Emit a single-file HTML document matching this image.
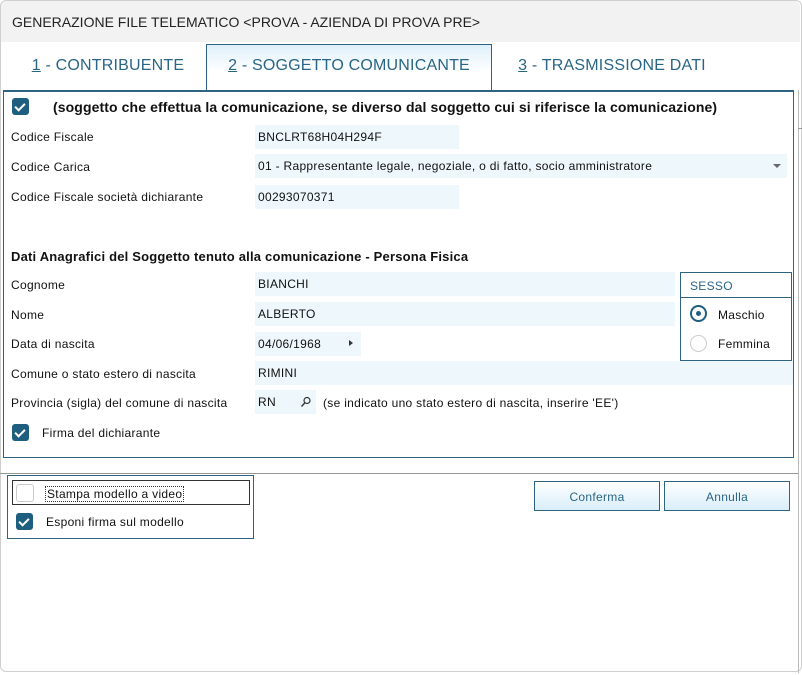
<!DOCTYPE html>
<html><head><meta charset="utf-8"><style>
*{box-sizing:border-box;margin:0;padding:0}
body{width:802px;height:675px;background:#fff;font-family:"Liberation Sans","DejaVu Sans",sans-serif;font-size:12px;letter-spacing:0.3px;color:#111;position:relative;overflow:hidden}
.a{position:absolute}
.win{left:0;top:0;width:802px;height:672px;border:1px solid #cfcfcf;border-radius:6px;background:#fff}
.title{left:1px;top:1px;width:799px;height:41px;background:#f2f2f2;border-radius:6px 6px 0 0;font-size:14px;letter-spacing:0;padding:13px 0 0 11px;color:#222}
.tab{top:44px;height:46px;font-size:16px;letter-spacing:0.2px;color:#2a6585;text-align:center;padding-top:13px}
.tab u{text-decoration:underline}
.act{border:1px solid #2e6382;border-bottom:none;background:linear-gradient(#dff0fa,#fff 60%)}
.panel{left:3px;top:90px;width:791px;height:368px;border:1px solid #2e6382;border-top-width:2px}
.fld{background:#eef7fc;height:24px;padding:5px 3px}
.lbl{left:11px}
.cb{width:17px;height:17px;border-radius:3px;background:#1e5f80}
.cb::after{content:"";position:absolute;left:5px;top:3px;width:4px;height:8px;border:solid #fff;border-width:0 2px 2px 0;transform:rotate(45deg)}
.btn{top:481px;height:30px;border:1px solid #2e6382;background:linear-gradient(#fff,#d9eef9);color:#2a6585;text-align:center;padding-top:8px}
</style></head><body>
<div class="a win"></div>
<div class="a title">GENERAZIONE FILE TELEMATICO &lt;PROVA - AZIENDA DI PROVA PRE&gt;</div>
<div class="a" style="left:0;top:473px;width:799px;border-top:1px solid #999"></div>
<div class="a" style="left:798px;top:90px;height:583px;border-left:1px solid #bbb"></div>
<div class="a" style="left:798px;top:128px;width:4px;border-top:1px solid #999"></div>
<div class="a tab" style="left:5px;width:206px"><u>1</u> - CONTRIBUENTE</div>
<div class="a tab act" style="left:206px;width:286px;padding-top:12px"><u>2</u> - SOGGETTO COMUNICANTE</div>
<div class="a tab" style="left:492px;width:240px"><u>3</u> - TRASMISSIONE DATI</div>
<div class="a panel"></div>
<div class="a cb" style="left:12px;top:98px"></div>
<div class="a" style="left:53px;top:99px;font-size:14px;font-weight:bold;letter-spacing:0.1px">(soggetto che effettua la comunicazione, se diverso dal soggetto cui si riferisce la comunicazione)</div>
<div class="a lbl" style="top:130px">Codice Fiscale</div>
<div class="a fld" style="left:255px;top:125px;width:204px">BNCLRT68H04H294F</div>
<div class="a lbl" style="top:160px">Codice Carica</div>
<div class="a fld" style="left:255px;top:154px;width:532px">01 - Rappresentante legale, negoziale, o di fatto, socio amministratore<span class="a" style="right:6px;top:10px;border:4px solid transparent;border-top:4px solid #666;border-bottom:none"></span></div>
<div class="a lbl" style="top:190px">Codice Fiscale società dichiarante</div>
<div class="a fld" style="left:255px;top:185px;width:204px">00293070371</div>
<div class="a" style="left:11px;top:249px;font-size:13px;font-weight:bold;letter-spacing:0.2px">Dati Anagrafici del Soggetto tenuto alla comunicazione - Persona Fisica</div>
<div class="a lbl" style="top:278px">Cognome</div>
<div class="a fld" style="left:255px;top:272px;width:420px">BIANCHI</div>
<div class="a lbl" style="top:308px">Nome</div>
<div class="a fld" style="left:255px;top:302px;width:420px">ALBERTO</div>
<div class="a lbl" style="top:337px">Data di nascita</div>
<div class="a fld" style="left:255px;top:332px;width:106px">04/06/1968<span class="a" style="left:94px;top:8px;border:3px solid transparent;border-left:4px solid #333;border-right:none"></span></div>
<div class="a lbl" style="top:367px">Comune o stato estero di nascita</div>
<div class="a fld" style="left:255px;top:361px;width:538px">RIMINI</div>
<div class="a lbl" style="top:396px">Provincia (sigla) del comune di nascita</div>
<div class="a fld" style="left:255px;top:390px;width:61px">RN<svg class="a" style="left:45px;top:6px" width="12" height="12" viewBox="0 0 12 12"><circle cx="7" cy="4.5" r="3" fill="none" stroke="#333" stroke-width="1.2"/><line x1="5" y1="6.7" x2="1.5" y2="10.5" stroke="#333" stroke-width="1.4"/></svg></div>
<div class="a" style="left:323px;top:396px">(se indicato uno stato estero di nascita, inserire 'EE')</div>
<div class="a cb" style="left:12px;top:424px"></div>
<div class="a" style="left:42px;top:426px">Firma del dichiarante</div>
<div class="a" style="left:680px;top:272px;width:112px;height:89px;border:1px solid #2e6382">
<div style="height:25px;border-bottom:1px solid #2e6382;color:#2a6585;padding:6px 0 0 9px">SESSO</div>
<div class="a" style="left:9px;top:32px;width:17px;height:17px;border:2px solid #1e5f80;border-radius:50%"><div class="a" style="left:4px;top:4px;width:5px;height:5px;border-radius:50%;background:#1e5f80"></div></div>
<div class="a" style="left:37px;top:35px">Maschio</div>
<div class="a" style="left:9px;top:62px;width:17px;height:17px;border:1px solid #ccc;border-radius:50%"></div>
<div class="a" style="left:37px;top:64px">Femmina</div>
</div>
<div class="a" style="left:7px;top:475px;width:247px;height:64px;border:1px solid #2e6382"></div>
<div class="a" style="left:12px;top:480px;width:238px;height:25px;border:1px solid #333"></div>
<div class="a" style="left:16px;top:484px;width:18px;height:18px;border:1px solid #ccc;border-radius:3px"></div>
<div class="a" style="left:45px;top:486px;border:1px dotted #333;padding:0 1px">Stampa modello a video</div>
<div class="a cb" style="left:16px;top:513px"></div>
<div class="a" style="left:46px;top:515px">Esponi firma sul modello</div>
<div class="a btn" style="left:534px;width:126px">Conferma</div>
<div class="a btn" style="left:664px;width:126px">Annulla</div>
</body></html>
